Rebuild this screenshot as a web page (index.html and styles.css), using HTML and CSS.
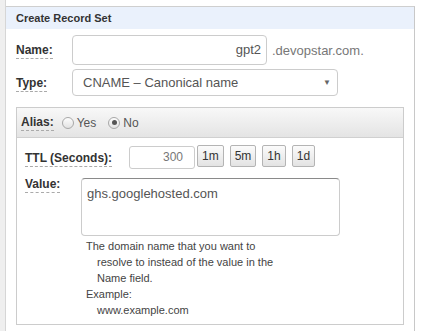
FILE: index.html
```html
<!DOCTYPE html>
<html lang="en">
<head>
  <meta charset="UTF-8" />
  <title>Create Record Set</title>
  <link rel="stylesheet" href="styles.css">
</head>
<body>
  <div class="page">
    <div class="side"></div>
    <div class="panel">
      <div class="panel-head">Create Record Set</div>
      <div class="panel-body">
        <div class="row">
          <span class="label name-label"><span class="tip">Name:</span></span>
          <div class="field name-field">gpt2</div>
          <span class="suffix">.devopstar.com.</span>
        </div>
        <div class="row type-row">
          <span class="label name-label"><span class="tip">Type:</span></span>
          <div class="field select">
            <span>CNAME &ndash; Canonical name</span>
            <span class="caret">&#9660;</span>
          </div>
        </div>

        <div class="alias-box">
          <div class="alias-head">
            <span class="tip">Alias:</span>
            <span class="radio"></span><span class="radio-text">Yes</span>
            <span class="radio checked"></span><span class="radio-text">No</span>
          </div>
          <div class="alias-body">
            <div class="row">
              <span class="label ttl-label"><span class="tip">TTL (Seconds):</span></span>
              <div class="field ttl-field">300</div>
              <div class="ttl-buttons">
                <button>1m</button>
                <button>5m</button>
                <button>1h</button>
                <button>1d</button>
              </div>
            </div>
            <div class="row value-row">
              <span class="label value-label"><span class="tip">Value:</span></span>
              <div class="value-col">
                <div class="field textarea">ghs.googlehosted.com</div>
                <div class="help">
                  <p>The domain name that you want to resolve to instead of the value in the Name field.</p>
                  <p>Example:<br>www.example.com</p>
                </div>
              </div>
            </div>
          </div>
        </div>
      </div>
    </div>
  </div>
</body>
</html>
```

FILE: styles.css
```css
* {
  box-sizing: border-box;
}
body {
  margin: 0;
  font-family: "Liberation Sans", Arial, sans-serif;
  color: #333;
  background: #fff;
}
.page {
  display: flex;
  height: 331px;
  overflow: hidden;
}
.side {
  width: 6px;
  background: #efefef;
  border-right: 1px solid #d6d6d6;
}
.panel {
  margin-top: 6px;
  width: 409px;
  border-top: 1px solid #cfcfcf;
  border-right: 1px solid #c8c8c8;
}
.panel-head {
  height: 22px;
  padding: 5px 10px 0;
  background: #eaf1fc;
  font-size: 11px;
  font-weight: bold;
  color: #333;
}
.panel-body {
  padding: 6px 0 0 10px;
}
.row {
  display: flex;
  align-items: center;
}
.label {
  font-size: 12px;
  font-weight: bold;
  color: #333;
}
.tip {
  border-bottom: 1px dashed #aaa;
  padding-bottom: 1px;
}
.name-label {
  width: 56px;
}
.field {
  border: 1px solid #ccc;
  border-radius: 4px;
  background: #fff;
  font-size: 13px;
  color: #555;
}
.name-field {
  width: 195px;
  height: 30px;
  line-height: 28px;
  text-align: right;
  padding-right: 5px;
}
.suffix {
  margin-left: 5px;
  font-size: 13px;
  color: #777;
}
.type-row {
  margin-top: 4px;
}
.select {
  width: 266px;
  height: 27px;
  display: flex;
  align-items: center;
  justify-content: space-between;
  padding: 0 6px 0 10px;
}
.caret {
  font-size: 8px;
  color: #666;
}
.alias-box {
  margin-top: 11px;
  width: 388px;
  border: 1px solid #ccc;
}
.alias-head {
  height: 30px;
  display: flex;
  align-items: center;
  padding-left: 4px;
  background: linear-gradient(#f8f8f8, #e4e4e4);
  border-bottom: 1px solid #d0d0d0;
  font-size: 12px;
}
.alias-head .tip {
  font-weight: bold;
  margin-right: 8px;
}
.radio {
  width: 12px;
  height: 12px;
  border: 1px solid #a8a8a8;
  border-radius: 50%;
  background: linear-gradient(#fdfdfd, #e2e2e2);
  display: flex;
  align-items: center;
  justify-content: center;
}
.radio.checked::after {
  content: "";
  width: 5px;
  height: 5px;
  border-radius: 50%;
  background: #555;
}
.radio-text {
  margin: 0 12px 0 3px;
  color: #555;
}
.alias-body {
  padding: 8px 0 6px 8px;
}
.ttl-label {
  width: 104px;
}
.ttl-field {
  width: 66px;
  height: 23px;
  line-height: 21px;
  border-radius: 3px;
  text-align: right;
  padding-right: 11px;
  font-size: 12px;
  color: #777;
}
.ttl-buttons {
  display: flex;
  gap: 6px;
  margin-left: 2px;
  align-self: flex-start;
  margin-top: -1px;
}
.ttl-buttons button {
  height: 22px;
  padding: 0 4px;
  font-family: inherit;
  font-size: 12px;
  color: #333;
  background: linear-gradient(#fbfbfb, #e3e3e3);
  border: 1px solid #b4b4b4;
  border-radius: 2px;
}
.value-row {
  margin-top: 9px;
  align-items: flex-start;
}
.value-label {
  width: 56px;
  line-height: 12px;
}
.textarea {
  width: 259px;
  height: 58px;
  padding: 7px 5px;
  line-height: 16px;
  border-top-color: #8a8a8a;
}
.help {
  margin-top: 2px;
  padding-left: 5px;
  width: 201px;
  font-size: 11px;
  line-height: 16px;
  color: #444;
}
.help p {
  margin: 0;
  padding-left: 11px;
  text-indent: -11px;
}
```
